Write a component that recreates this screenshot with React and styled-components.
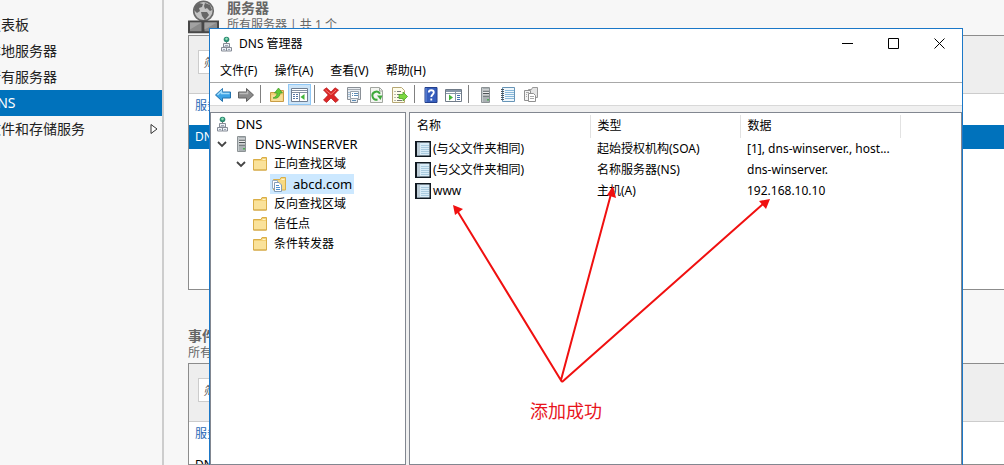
import React from "react";
import styled, { createGlobalStyle } from "styled-components";

const Global = createGlobalStyle`
  * { box-sizing: border-box; }
  body {
    margin: 0;
    font-family: "Noto Sans", "Noto Sans CJK SC", sans-serif;
    font-size: 12px;
    line-height: 20px;
    color: #000;
    background: #f7f7f7;
  }
  button { font: inherit; color: inherit; background: none; border: 0; padding: 0; }
  ul { list-style: none; margin: 0; padding: 0; }
  svg { display: block; flex: none; }
`;

/* ---------- server manager ---------- */

const Desktop = styled.div`
  position: relative;
  display: flex;
  height: 100vh;
  overflow: hidden;
`;

const Sidebar = styled.nav`
  flex: none;
  width: 164px;
  padding-top: 12px;
  border-right: 2px solid #cdcdcd;
  overflow: hidden;
`;

const NavLink = styled.a`
  display: flex;
  align-items: center;
  justify-content: space-between;
  height: 26px;
  margin-left: -13px;
  padding-right: 4px;
  font-size: 14px;
  white-space: nowrap;
  text-decoration: none;
  color: ${(p) => (p.$active ? "#fff" : "#222")};
  background: ${(p) => (p.$active ? "#0072bc" : "transparent")};
`;

const Main = styled.main`
  flex: 1;
  min-width: 0;
  display: flex;
  flex-direction: column;
  padding-left: 24px;
`;

const TileHead = styled.header`
  display: flex;
  gap: 8px;
  height: 35px;
  color: #666;
`;

const TileTitle = styled.h2`
  margin: 0;
  font-size: 14px;
  line-height: 16px;
  font-weight: 700;
`;

const TileSub = styled.p`
  margin: 0;
  line-height: 18px;
  white-space: nowrap;
`;

const Tile = styled.section`
  border: 1px solid #8c8c8c;
  border-right: 0;
  background: #fff;
  height: ${(p) => (p.$fill ? "auto" : "255px")};
  flex: ${(p) => (p.$fill ? "1" : "none")};
  overflow: hidden;
`;

const FilterBar = styled.div`
  height: 58px;
  padding: 14px 9px;
  background: #eee;
  border-bottom: 1px solid #ccc;
`;

const FilterInput = styled.input`
  display: block;
  width: 200px;
  height: 24px;
  padding: 0 4px;
  border: 1px solid #ccc;
  background: #fff;
  font: italic 12px "Noto Sans", "Noto Sans CJK SC", sans-serif;
  &::placeholder { color: #555; opacity: 1; }
`;

const Grid = styled.table`
  width: 100%;
  border-collapse: collapse;
  th, td { padding: 0 6px; text-align: left; font-weight: 400; }
  th { height: 31px; padding-bottom: 8px; color: #2a69b5; }
  td { height: 24px; }
`;

const GridRow = styled.tr`
  color: ${(p) => (p.$active ? "#fff" : "#000")};
  background: ${(p) => (p.$active ? "#0072bc" : "#fff")};
`;

const EventsHead = styled.header`
  padding-top: 38px;
  height: 73px;
  color: #666;
`;

/* ---------- DNS console window ---------- */

const Window = styled.section`
  position: absolute;
  top: 28px;
  left: 209px;
  right: 41px;
  bottom: -1px;
  display: flex;
  flex-direction: column;
  background: #f0f0f0;
  border: 1px solid #1b78c8;
`;

const TitleBar = styled.header`
  display: flex;
  align-items: center;
  height: 29px;
  padding-left: 8px;
  gap: 5px;
  background: #fff;
`;

const WindowTitle = styled.h1`
  flex: 1;
  margin: 0;
  font-size: 12px;
  font-weight: 400;
`;

const CaptionButtons = styled.div`
  display: flex;
`;

const CaptionButton = styled.button`
  width: 46px;
  height: 29px;
  display: grid;
  place-items: center;
`;

const MenuBar = styled.nav`
  display: flex;
  gap: 17px;
  height: 25px;
  padding: 2px 10px 0;
  background: #fff;
  border-bottom: 1px solid #a8a8a8;
`;

const Toolbar = styled.div`
  display: flex;
  align-items: flex-end;
  height: 23px;
  padding-left: 1px;
  background: #fff;
  border-bottom: 1px solid #d8d8d8;
`;

const ToolButton = styled.button`
  display: grid;
  place-items: center;
  width: 23px;
  height: 21px;
  border: 1px solid ${(p) => (p.$on ? "#90c8f6" : "transparent")};
  background: ${(p) => (p.$on ? "#cce4f7" : "transparent")};
`;

const ToolSep = styled.span`
  width: 1px;
  height: 18px;
  margin: 0 4px 2px 3px;
  background: #808080;
`;

const Panes = styled.div`
  flex: 1;
  display: flex;
  gap: 3px;
  padding-top: 6px;
  min-height: 0;
`;

const Pane = styled.div`
  flex: ${(p) => (p.$grow ? "1" : "none")};
  width: ${(p) => (p.$grow ? "auto" : "196px")};
  min-width: 0;
  background: #fff;
  border: 1px solid #828790;
  padding-top: ${(p) => (p.$grow ? "2px" : "1px")};
  overflow: hidden;
`;

const TreeRow = styled.li`
  display: flex;
  align-items: center;
  height: 20px;
  padding-left: ${(p) => 2 + 19 * p.$level}px;
`;

const Twisty = styled.button`
  width: 19px;
  height: 20px;
  padding-left: 4px;
  margin-left: -19px;
`;

const TreeLabel = styled.button`
  display: flex;
  align-items: center;
  gap: 6px;
  height: 20px;
  padding: 0 2px 0 1px;
  white-space: nowrap;
  line-height: 18px;
  font-size: ${(p) => (p.$latin ? "13px" : "12px")};
  background: ${(p) => (p.$active ? "#cce8ff" : "transparent")};
`;

const Records = styled.table`
  border-collapse: collapse;
  table-layout: fixed;
  width: 490px;
  th, td { text-align: left; font-weight: 400; white-space: nowrap; }
  th { height: 23px; padding: 0 7px 2px; border-right: 1px solid #e2e2e2; }
  td { height: 21px; padding: 0 7px; line-height: 18px; }
  td:first-child { padding-left: 5px; }
`;

const NameCell = styled.span`
  display: flex;
  align-items: center;
  gap: 2px;
`;

const Arrows = styled.svg`
  position: absolute;
  top: 0;
  left: 0;
  pointer-events: none;
`;

const Note = styled.p`
  position: absolute;
  top: 398px;
  left: 530px;
  margin: 0;
  font-size: 18px;
  line-height: 26px;
  color: #e8141c;
`;

/* ---------- icons ---------- */

const Svg = ({ w = 16, h = 16, children }) => (
  <svg width={w} height={h} viewBox={`0 0 ${w} ${h}`} fill="none" aria-hidden="true">{children}</svg>
);

const ServersIcon = () => (
  <Svg w={31} h={34}>
    <circle cx="15.500" cy="11" r="9.800" fill="#c4c4c4" stroke="#6a6a6a" strokeWidth="1.600" />
    <path d="M7 6l4-3 4 1-1 3-3 1 1 3-3 2-3-3zM17 3l5 2 2 5-2 1-3-3-2 1-1-3zM13 12l6 0 2 3-4 5-3-4z" fill="#666" />
    <path d="M1 21.500h13.500v10.800H1zM15.500 21.500H30v10.800H15.500z" fill="#8a8a8a" stroke="#484848" strokeWidth="2" />
    <path d="M2 22.500h11.500l-11.500 7zM16.500 22.500h12.500l-12.500 7z" fill="#a2a2a2" />
  </Svg>
);

const DnsIcon = () => (
  <Svg>
    <circle cx="8.500" cy="3.500" r="2.800" fill="#2b8a72" />
    <path d="M6.500 3l2-1.500 1.500 1L9 4.500z" fill="#8fe0b8" />
    <path d="M8.500 6v2" stroke="#777" />
    <path d="M5.500 7.500h6v3.500h-6zM3.500 11.500h5v3.500h-5zM8.500 11.500h5v3.500h-5z" fill="#eef1f6" stroke="#858b96" />
    <path d="M7 9.500h3M5 13.500h2M10 13.500h2" stroke="#9aa5b5" />
  </Svg>
);

const ServerIcon = () => (
  <Svg>
    <path d="M4 1h8v14H4z" fill="#a9b0b3" />
    <path d="M4 1h2v14H4z" fill="#c4cacc" />
    <path d="M4.500.5h8v15h-8z" stroke="#8c9295" />
    <path d="M6 4h6M6 6.500h6M6 9h6" stroke="#4c5254" />
    <path d="M6 3h6M6 5.500h6M6 8h6" stroke="#eee" />
    <path d="M10 12h2v1.500h-2z" fill="#4fae55" />
  </Svg>
);

const FolderIcon = () => (
  <Svg>
    <path d="M1.500 3.500H9l1-2h4.500v12.500h-13z" fill="#f3d074" stroke="#d9ae48" />
    <path d="M2 5h12v8.500H2z" fill="#fae29a" />
    <path d="M10.500 3.500h3" stroke="#fff5cf" />
    <path d="M1.500 14h13" stroke="#d2a644" />
  </Svg>
);

const ZoneIcon = () => (
  <Svg>
    <path d="M2.500 3.500H9l1-2h4.500v12.500h-12z" fill="#f7da83" stroke="#d9ae48" />
    <path d="M10.500 3.500h3" stroke="#fff5cf" />
    <path d="M1.500 4.500h5v8h-5z" fill="#fff" stroke="#9caebf" />
    <path d="M3.500 6.500H8L10.500 9v6.500h-7z" fill="#fff" stroke="#829cb8" />
    <path d="M5 9.500h3M5 11.500h4M5 13.500h4" stroke="#4d91cf" />
  </Svg>
);

const RecordIcon = () => (
  <Svg>
    <path d="M0 0h16v16H0z" fill="#101820" />
    <path d="M2 1.500h12.500v13H2z" fill="#d9ecf8" />
    <path d="M2 1.500h3v13H2z" fill="#8fa5b3" />
    <path d="M2 3h3M2 5h3M2 7h3M2 9h3M2 11h3M2 13h3" stroke="#e9f3f9" />
    <path d="M6 4.500h8M6 6.500h8M6 8.500h8M6 10.500h8M6 12.500h8" stroke="#a9cade" />
  </Svg>
);

const Chevron = () => (
  <Svg w={10} h={8}><path d="M1 2l4 4 4-4" stroke="#444" strokeWidth="1.800" /></Svg>
);

const BackIcon = () => (
  <Svg><path d="M.5 8L7.500 1.500v3.500h8v6h-8v3.500z" fill="#3ba3e6" stroke="#2372ad" /><path d="M2.500 8L6.500 4v2.500h8" stroke="#a2dcfa" strokeWidth="1.500" /></Svg>
);
const ForwardIcon = () => (
  <Svg><path d="M15.500 8L8.500 1.500v3.500h-8v6h8v3.500z" fill="#8b8b8b" stroke="#606060" /><path d="M1.500 6.500h8V4" stroke="#bbb" strokeWidth="1.500" /></Svg>
);
const UpIcon = () => (
  <Svg>
    <path d="M1.500 5.500h6l1-2h6v11h-13z" fill="#f3d078" stroke="#c99c44" />
    <path d="M2.500 8h11v6h-11z" fill="#f8de98" />
    <path d="M4 11c3-1 4-3 4-5H5.500L9.500 1l4 5H11c0 4-3 6-7 5z" fill="#61c936" stroke="#3f9625" strokeWidth=".7" />
  </Svg>
);
const TreePaneIcon = () => (
  <Svg w={17}>
    <path d="M.5 1.500h16v13H.5z" fill="#fff" stroke="#707e91" />
    <path d="M1 3.500h15M1 5.500h15M8.500 6v8" stroke="#8390a2" />
    <path d="M2 7.500h2M5 7.500h2M2 9.500h2M5 9.500h2M2 11.500h2M5 11.500h2" stroke="#5477a5" />
    <path d="M13.500 7v6l-4-3z" fill="#42b53b" />
  </Svg>
);
const DeleteIcon = () => (
  <Svg><path d="M.5 3L3.500.8 8 5l4-4.200L15.500 3l-4.700 5 4.700 5-3 2.500L8 11l-4.500 4.500L.5 13l4.700-5z" fill="#dc2626" stroke="#b51a1c" strokeWidth=".7" /><path d="M2.500 3l5.500 4.500L13 3" stroke="#f37c71" /></Svg>
);
const PropsIcon = () => (
  <Svg>
    <path d="M1.500.5h13v12h-3v3h-7v-3h-3z" fill="#e9edf1" stroke="#8a9097" />
    <path d="M2 2.500h12" stroke="#a3a9b0" />
    <path d="M4.500 4.500h8v7h-8z" fill="#fff" stroke="#9aa3ac" />
    <path d="M2.500 5.500h1M2.500 7.500h1M2.500 9.500h1M6 6.500h1M8 6.500h4M6 8.500h1M8 8.500h4M6 13.500h4" stroke="#5a8ab4" />
  </Svg>
);
const RefreshIcon = () => (
  <Svg>
    <path d="M1.500.5h9l3 3v12h-12z" fill="#f3f5f1" stroke="#a2a6a0" />
    <path d="M10.500 1v3h3" stroke="#a2a6a0" />
    <path d="M11 6.800A4 4 0 1 0 8.500 12.500" stroke="#3da83a" strokeWidth="2" />
    <path d="M8 8.500h5.500l-2 4.500z" fill="#3da83a" />
  </Svg>
);
const ExportIcon = () => (
  <Svg>
    <path d="M.5.5h9l3 3v12H.5z" fill="#fffdea" stroke="#b6a774" />
    <path d="M2.500 4.500h1M5 4.500h4M2.500 7.500h1M5 7.500h3M2.500 10.500h1M5 10.500h3M2.500 13.500h1M5 13.500h5" stroke="#777" />
    <path d="M7 7.500h4V5l4.500 4.500L11 14v-2.500H7z" fill="#7bd83f" stroke="#4da52a" strokeWidth=".8" />
  </Svg>
);
const HelpIcon = () => (
  <Svg>
    <path d="M2 .5h12v15H2z" fill="#365ebd" stroke="#233f8b" />
    <path d="M3 1v14" stroke="#7192dd" />
    <path d="M5.800 5.500c0-3 5-3 5 0 0 2-2.500 2-2.500 4.500M8.300 11.500v2" stroke="#fff" strokeWidth="1.800" />
  </Svg>
);
const ActionPaneIcon = () => (
  <Svg w={17}>
    <path d="M.5 2.500h16v12H.5z" fill="#fff" stroke="#707b88" />
    <path d="M1 4h15" stroke="#8797a9" strokeWidth="2" />
    <path d="M10.500 5v9M1 6.500h15" stroke="#8797a9" />
    <path d="M12 8.500h3M12 10.500h3M12 12.500h3" stroke="#4171b5" />
    <path d="M4 7.500v6L8 10.500z" fill="#42b53b" />
  </Svg>
);
const BookIcon = () => (
  <Svg>
    <path d="M2.500.5h12v14h-12z" fill="#eff7fc" stroke="#6795b7" />
    <path d="M1 2.500h3M1 4.500h3M1 6.500h3M1 8.500h3M1 10.500h3M1 12.500h3" stroke="#4c5660" />
    <path d="M5 3.500h9M5 5.500h9M5 7.500h9M5 9.500h9M5 11.500h9" stroke="#8ab9da" />
  </Svg>
);
const CopyIcon = () => (
  <Svg>
    <path d="M5.500 2.500h3l1-2h5v10h-9z" fill="#e4e4e4" stroke="#999" />
    <path d="M1.500 3.500h6v10h-6z" fill="#f4f4f4" stroke="#909090" />
    <path d="M5.500 6.500h5l2 2v6h-7z" fill="#fff" stroke="#909090" />
    <path d="M3 5.500h3M3 7.500h1M3 9.500h1M7 9.500h4M7 11.500h4" stroke="#aaa" />
  </Svg>
);

/* ---------- data ---------- */

const NAV = [
  { text: "仪表板" },
  { text: "本地服务器" },
  { text: "所有服务器" },
  { text: "DNS", active: true },
  { text: "文件和存储服务", more: true },
];

const TOOLS = [
  [["后退", BackIcon], ["前进", ForwardIcon]],
  [["向上", UpIcon], ["显示控制台树", TreePaneIcon, true]],
  [["删除", DeleteIcon], ["属性", PropsIcon], ["刷新", RefreshIcon], ["导出列表", ExportIcon]],
  [["帮助", HelpIcon], ["显示操作窗格", ActionPaneIcon]],
  [["服务器", ServerIcon], ["记录", BookIcon], ["区域", CopyIcon]],
];

const TREE = [
  { level: 0, text: "DNS", icon: DnsIcon, latin: true },
  { level: 1, text: "DNS-WINSERVER", icon: ServerIcon, latin: true, open: true },
  { level: 2, text: "正向查找区域", icon: FolderIcon, open: true },
  { level: 3, text: "abcd.com", icon: ZoneIcon, latin: true, active: true },
  { level: 2, text: "反向查找区域", icon: FolderIcon },
  { level: 2, text: "信任点", icon: FolderIcon },
  { level: 2, text: "条件转发器", icon: FolderIcon },
];

const RECORDS = [
  ["(与父文件夹相同)", "起始授权机构(SOA)", "[1], dns-winserver., host..."],
  ["(与父文件夹相同)", "名称服务器(NS)", "dns-winserver."],
  ["www", "主机(A)", "192.168.10.10"],
];

function ServerTable({ active }) {
  return (
    <Grid>
      <thead><tr><th>服务器名称</th></tr></thead>
      <tbody><GridRow $active={active}><td>DNS-WINSERVER</td></GridRow></tbody>
    </Grid>
  );
}

function DnsManager() {
  return (
    <Window aria-label="DNS 管理器">
      <TitleBar>
        <DnsIcon />
        <WindowTitle>DNS 管理器</WindowTitle>
        <CaptionButtons>
          <CaptionButton aria-label="最小化"><Svg w={11} h={11}><path d="M0 5.500h11" stroke="#000" /></Svg></CaptionButton>
          <CaptionButton aria-label="最大化"><Svg w={11} h={11}><path d="M.5.5h10v10H.5z" stroke="#000" /></Svg></CaptionButton>
          <CaptionButton aria-label="关闭"><Svg w={11} h={11}><path d="M.5.5l10 10M10.500.5l-10 10" stroke="#000" /></Svg></CaptionButton>
        </CaptionButtons>
      </TitleBar>
      <MenuBar>
        {["文件(F)", "操作(A)", "查看(V)", "帮助(H)"].map((m) => <button key={m}>{m}</button>)}
      </MenuBar>
      <Toolbar>
        {TOOLS.map((group, g) => (
          <React.Fragment key={g}>
            {g > 0 && <ToolSep />}
            {group.map(([label, Icon, on]) => (
              <ToolButton key={label} aria-label={label} $on={on}><Icon /></ToolButton>
            ))}
          </React.Fragment>
        ))}
      </Toolbar>
      <Panes>
        <Pane>
          <ul>
            {TREE.map(({ level, text, icon: Icon, latin, open, active }) => (
              <TreeRow key={text} $level={level}>
                {open && <Twisty aria-label={`折叠 ${text}`}><Chevron /></Twisty>}
                <TreeLabel $active={active} $latin={latin}><Icon />{text}</TreeLabel>
              </TreeRow>
            ))}
          </ul>
        </Pane>
        <Pane $grow>
          <Records>
            <colgroup><col width="180" /><col width="150" /><col width="160" /></colgroup>
            <thead><tr><th>名称</th><th>类型</th><th>数据</th></tr></thead>
            <tbody>
              {RECORDS.map(([name, type, data]) => (
                <tr key={type}>
                  <td><NameCell><RecordIcon />{name}</NameCell></td>
                  <td>{type}</td>
                  <td>{data}</td>
                </tr>
              ))}
            </tbody>
          </Records>
        </Pane>
      </Panes>
    </Window>
  );
}

export default function App() {
  return (
    <>
      <Global />
      <Desktop>
        <Sidebar>
          {NAV.map(({ text, active, more }) => (
            <NavLink key={text} href="#" $active={active}>
              {text}
              {more && <Svg w={8} h={12}><path d="M1 1.500l6 4.500-6 4.500z" fill="#fff" stroke="#333" /></Svg>}
            </NavLink>
          ))}
        </Sidebar>
        <Main>
          <TileHead>
            <ServersIcon />
            <div>
              <TileTitle>服务器</TileTitle>
              <TileSub>所有服务器 | 共 1 个</TileSub>
            </div>
          </TileHead>
          <Tile>
            <FilterBar><FilterInput aria-label="筛选服务器" placeholder="筛选器" /></FilterBar>
            <ServerTable active />
          </Tile>
          <EventsHead>
            <TileTitle>事件</TileTitle>
            <TileSub>所有事件 | 共 1 个</TileSub>
          </EventsHead>
          <Tile $fill>
            <FilterBar><FilterInput aria-label="筛选事件" placeholder="筛选器" /></FilterBar>
            <ServerTable />
          </Tile>
        </Main>
        <DnsManager />
        <Arrows width="1004" height="465" viewBox="0 0 1004 465" aria-hidden="true">
          <path d="M562 382L458 212M561 380L611 194M562 382L763 204" stroke="#f01010" strokeWidth="2" fill="none" />
          <path d="M453 205l10 4-8 6zM613 186l3 12-9-3zM770 199l-4 10-7-8z" fill="#f01010" />
        </Arrows>
        <Note>添加成功</Note>
      </Desktop>
    </>
  );
}
